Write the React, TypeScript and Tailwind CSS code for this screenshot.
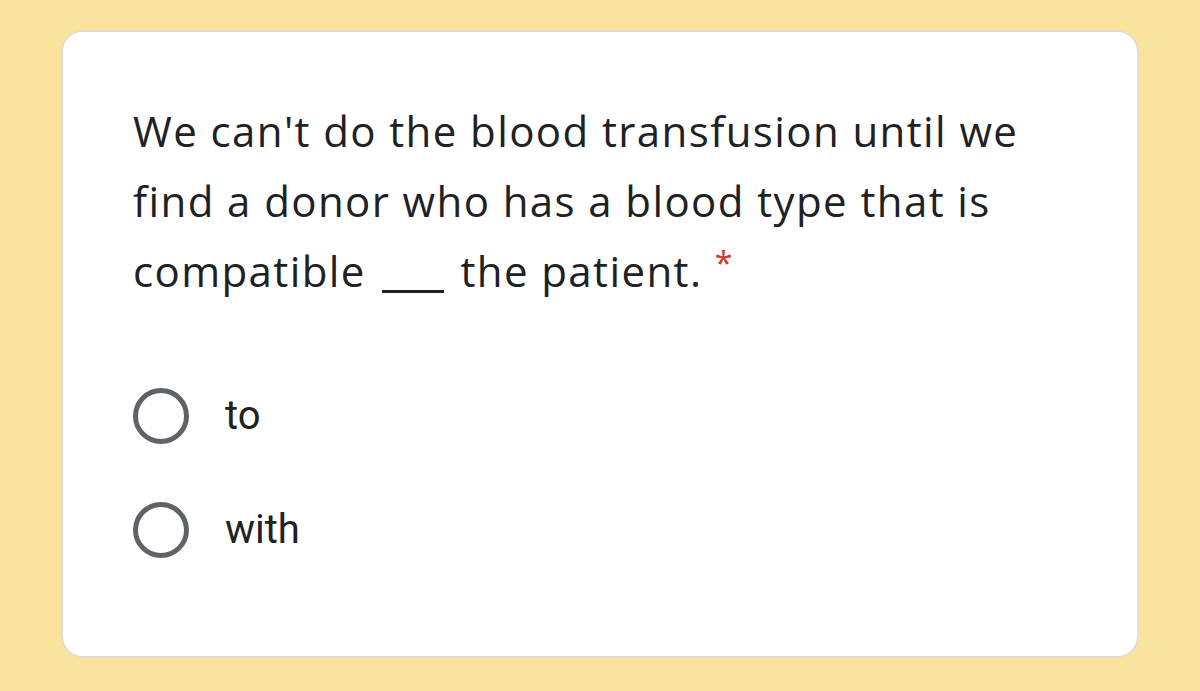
const Radio = ({ label }: { label: string }) => (
    <div className="flex items-center gap-[36px]">
        <div className="h-[56px] w-[56px] shrink-0 rounded-full border-[5px] border-[#5f6368]" />
        <span className="text-[40px] leading-none text-[#202124]">{label}</span>
    </div>
);

export default function App() {
    return (
        <div className="flex h-[691px] w-[1200px] bg-[#fae39d] px-[61px] pt-[30px] pb-[33px] font-['Open_Sans',sans-serif]">
            <div className="flex-1 rounded-[22px] border-2 border-[#e2ddd0] bg-white pl-[70px] pr-[20px] pt-[64px]">
                <p className="text-[42px] leading-[70px] tracking-[1.4px] text-[#202124]">
                    We can't do the blood transfusion until we
                    <br />
                    find a donor who has a blood type that is
                    <br />
                    compatible{" "}
                    <span className="mx-[4px] inline-block h-[1px] w-[62px] border-b-[3px] border-[#202124] align-[-6px]" />{" "}
                    the patient.{" "}
                    <span className="relative -top-[12px] text-[32px] text-[#d93025]">*</span>
                </p>
                <div className="mt-[78px] flex flex-col gap-[58px] font-['Roboto',sans-serif]">
                    <Radio label="to" />
                    <Radio label="with" />
                </div>
            </div>
        </div>
    );
}
